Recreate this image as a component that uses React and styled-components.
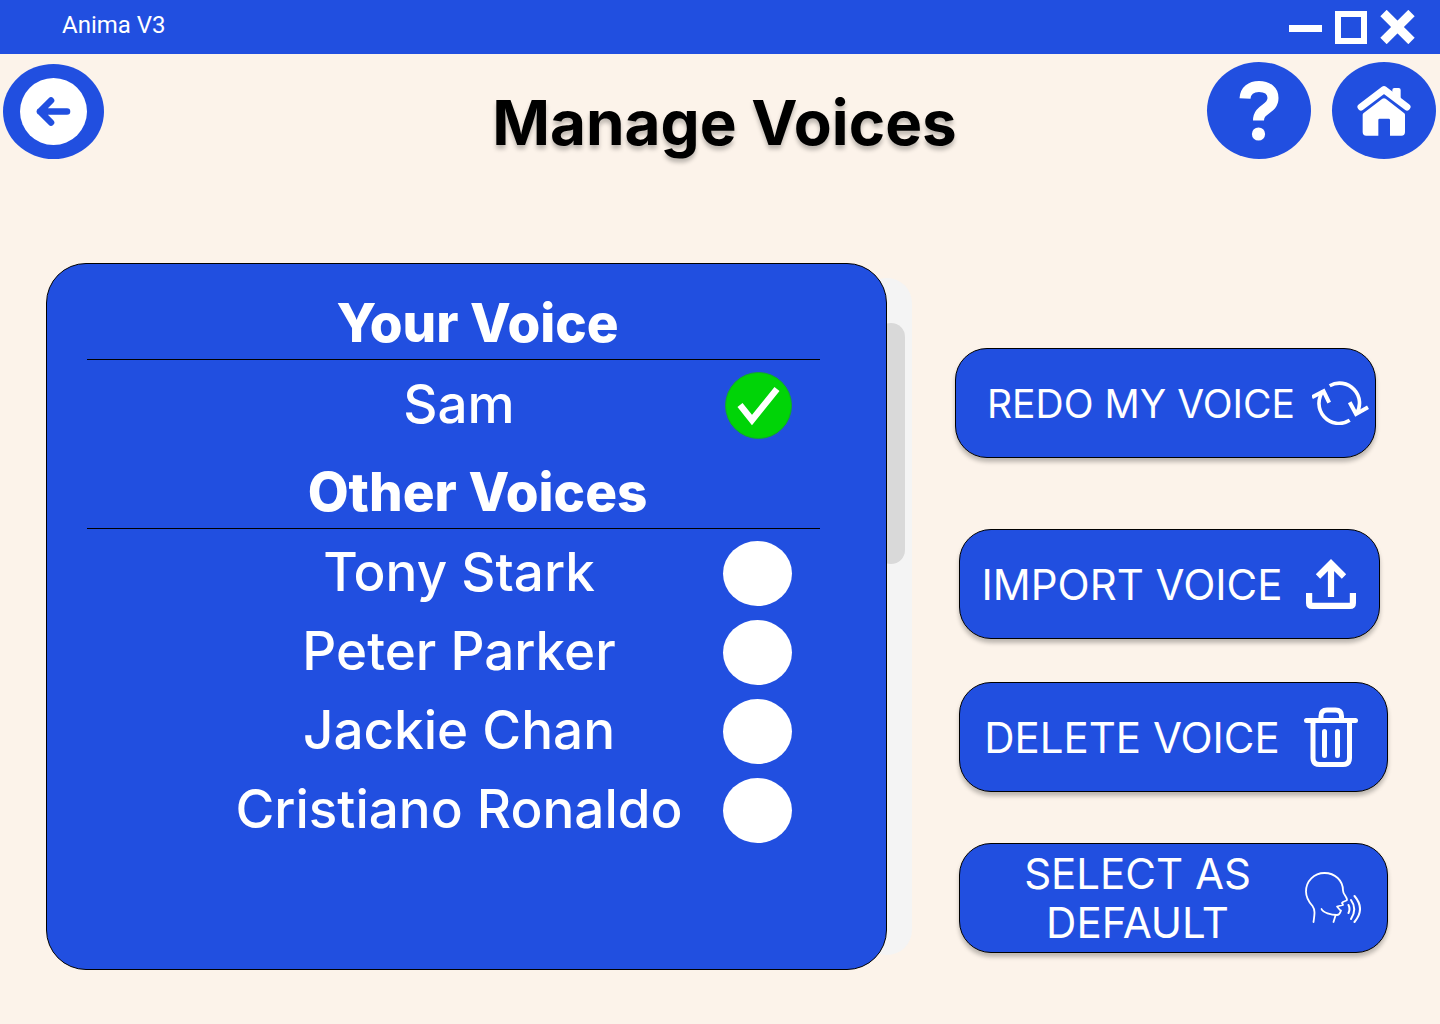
import React, { useState } from "react";
import styled, { createGlobalStyle } from "styled-components";

const blue = "#214fe0";
const display = `Inter, "Open Sans", sans-serif`;

const GlobalStyle = createGlobalStyle`
  *, *::before, *::after { box-sizing: border-box; }
  body { margin: 0; background: #fcf3ea; font-family: ${display}; }
  button { border: 0; padding: 0; background: none; font: inherit; color: inherit; cursor: pointer; }
  svg { display: block; flex: none; }
`;

const Page = styled.div`
  min-height: 100vh;
  display: flex;
  flex-direction: column;
`;

const TitleBar = styled.div`
  height: 54px;
  padding: 0 25px 0 62px;
  display: flex;
  justify-content: space-between;
  align-items: center;
  background: ${blue};
  color: #fff;
`;

const AppName = styled.span`
  font: 400 24px/28px Roboto, sans-serif;
  padding-bottom: 4px;
`;

const WindowControls = styled.div`
  display: flex;
  align-items: center;
  gap: 13px;
`;

const WindowButton = styled.button`
  display: grid;
  place-items: center;
`;

const Header = styled.header`
  display: grid;
  grid-template-columns: 1fr auto 1fr;
  align-items: end;
  padding: 8px 4px 0 3px;
`;

const Title = styled.h1`
  margin: 0;
  padding: 0 0 0 10px;
  font-size: 62px;
  line-height: 72px;
  font-weight: 700;
  color: #000;
  text-shadow: 0 4px 4px rgba(0, 0, 0, 0.25);
`;

const HeaderActions = styled.div`
  display: flex;
  justify-content: flex-end;
  gap: 21px;
`;

const RoundButton = styled.button`
  width: ${(p) => (p.$small ? 101 : 104)}px;
  height: ${(p) => (p.$small ? 95 : 97)}px;
  border-radius: 50%;
  background: ${blue};
  display: grid;
  place-items: center;
`;

const Main = styled.main`
  flex: 1;
  display: grid;
  grid-template-columns: minmax(0, 1fr) 433px;
  gap: 43px;
  padding: 104px 52px 54px 46px;
`;

const ListArea = styled.section`
  display: flex;
`;

const Panel = styled.div`
  position: relative;
  z-index: 1;
  flex: 1;
  min-width: 0;
  padding: 32px 66px 32px 40px;
  border: 1px solid #000;
  border-radius: 40px;
  background: ${blue};
  color: #fff;
`;

const ScrollTrack = styled.div`
  width: 50px;
  margin: 15px 0 15px -25px;
  padding: 45px 7px 0 15px;
  border-radius: 25px;
  background: #f4f4f4;
`;

const ScrollThumb = styled.div`
  height: 241px;
  border-radius: 14px;
  background: #d9d9d9;
`;

const VoiceGroup = styled.fieldset`
  min-width: 0;
  margin: 0 0 ${(p) => p.$after || 0}px;
  padding: 0;
  border: 0;
`;

const GroupTitle = styled.legend`
  width: 100%;
  height: 64px;
  padding: 0 0 0 48px;
  border-bottom: 1px solid #000;
  font-size: 53px;
  line-height: 54px;
  font-weight: 800;
  text-align: center;
`;

const VoiceList = styled.div`
  display: grid;
  gap: 14px;
  padding: 12px 28px 0 110px;
`;

const VoiceRow = styled.label`
  display: grid;
  grid-template-columns: 1fr 69px;
  align-items: center;
  min-height: 65px;
  font-size: 53px;
  line-height: 60px;
  font-weight: 500;
  cursor: pointer;
`;

const VoiceName = styled.span`
  padding: 0 2px 4px 0;
  text-align: center;
  white-space: nowrap;
`;

const Choice = styled.span`
  display: grid;
  place-items: center;

  & > * { grid-area: 1 / 1; }
  & > svg { pointer-events: none; }
`;

const Radio = styled.input`
  appearance: none;
  margin: 0;
  width: 69px;
  height: 65px;
  border-radius: 50%;
  background: #fff;
  cursor: pointer;

  &:checked {
    width: 67px;
    height: 67px;
    justify-self: end;
    background: #00d407;
    border: 1px solid #12a52f;
  }
`;

const Actions = styled.aside`
  display: flex;
  flex-direction: column;
  padding-top: 85px;
`;

const ActionButton = styled.button`
  && {
    display: flex;
    align-items: center;
    min-height: 110px;
    margin: ${(p) => p.$before || 0}px ${(p) => p.$end || 0}px 0 ${(p) => p.$start || 0}px;
    padding: 0 ${(p) => p.$padEnd}px 0 ${(p) => p.$padStart || 3}px;
    border: 1px solid #000;
    border-radius: 32px;
    background: ${blue};
    box-shadow: 0 4px 4px rgba(0, 0, 0, 0.25);
    color: #fff;
    font-size: ${(p) => p.$size || 42}px;
    line-height: 49px;
    font-weight: 400;
  }
`;

const ActionLabel = styled.span`
  flex: 1;
  text-align: center;
  white-space: pre-line;
`;

const ActionIcon = styled.span`
  width: 60px;
  display: grid;
  place-items: center;
`;

const BackIcon = () => (
  <svg width="67" height="67" viewBox="0 0 67 67" aria-hidden="true">
    <circle cx="33.5" cy="33.5" r="33.5" fill="#fff" />
    <path d="M31 22.5 20 33.5l11 11M20 33.5h27" fill="none" stroke={blue} strokeWidth="6.6" strokeLinecap="round" strokeLinejoin="round" />
  </svg>
);

const HelpIcon = () => (
  <svg width="40" height="60" viewBox="-1 0 40 60" aria-hidden="true">
    <path d="M5 17.5C5.500 9.500 11 5.500 19 5.500c8.500 0 14 4.500 14 11.500C33 29 18.500 27 18.500 39.500" fill="none" stroke="#fff" strokeWidth="11" />
    <circle cx="18.500" cy="53" r="6.600" fill="#fff" />
  </svg>
);

const HomeIcon = () => (
  <svg width="54" height="50" viewBox="532 256 162 150" aria-hidden="true">
    <path d="M638 290v-22q0-6 6-6h13q6 0 6 6v44Z" fill="#fff" />
    <path d="M544 319l69-52 69 52" fill="none" stroke="#fff" strokeWidth="21" strokeLinecap="round" strokeLinejoin="round" />
    <path d="M549 342q0-3 3-5l56-43q5-3 10 0l55 43q3 2 3 5v52q0 11-11 11h-34v-47q0-4-4-4h-27q-4 0-4 4v47h-36q-11 0-11-11Z" fill="#fff" />
  </svg>
);

const CheckIcon = () => (
  <svg width="44" height="40" viewBox="0 0 44 40" aria-hidden="true">
    <path d="M4 19l12 15L41 3" fill="none" stroke="#fff" strokeWidth="6.500" />
  </svg>
);

const RedoIcon = () => (
  <svg width="57" height="44" viewBox="0 0 57 44" aria-hidden="true" fill="none" stroke="#fff" strokeWidth="3.600">
    <path d="M17.700 4.700A20 20 0 0 1 44.300 33M37.700 39.300A20 20 0 0 1 11.300 10" />
    <path d="M0 16.300l11.600-6.100 5.600 11.500M37.700 21.300l6.300 11.700 12-6.700" strokeWidth="4" />
  </svg>
);

const ImportIcon = () => (
  <svg width="50" height="50" viewBox="0 0 50 50" aria-hidden="true" fill="none" stroke="#fff" strokeWidth="6.200">
    <path d="M25 38V5M12 17.500 25 4.500l13 13" />
    <path d="M3.100 34v10q0 2.900 3 2.900h37.800q3 0 3-2.900V34" />
  </svg>
);

const TrashIcon = () => (
  <svg width="54" height="60" viewBox="0 0 54 60" aria-hidden="true" fill="none" stroke="#fff" strokeWidth="5" strokeLinecap="round">
    <path d="M2.500 13.500h49M17 12V9q0-6 6-6h8.500q6 0 6 6v3" />
    <path d="M9 14v37q0 6.500 6.500 6.500h23.500q6.500 0 6.500-6.500V14" />
    <path d="M20.500 24.500v24M33.500 24.500v24" />
  </svg>
);

const SpeakIcon = () => (
  <svg width="56" height="52" viewBox="0 0 56 52" aria-hidden="true" fill="none" stroke="#fff" strokeWidth="1.800" strokeLinecap="round" strokeLinejoin="round">
    <path d="M8.500 50c1-7 2-12-1-16C3 29 1 25 1 19.500 1 9 9 1 19.500 1 30 1 38 8.500 38 18.500c0 4 4 6 4 9.500 0 1-4 1-5 3l1 2-6 1.500 3 3.500 1 .500c-1 2-1 4.500-4 4.500C26 43 18 40.500 16.500 37" />
    <path d="M30.500 43.500 28.500 50" />
    <path d="M43.500 33q2 4 0 8M46 28q6.500 9 0 19M49.500 24q11 13 0 26" strokeWidth="2" />
  </svg>
);

const groups = [
  { title: "Your Voice", voices: ["Sam"], after: 26 },
  { title: "Other Voices", voices: ["Tony Stark", "Peter Parker", "Jackie Chan", "Cristiano Ronaldo"] },
];

export default function App() {
  const [selected, setSelected] = useState("Sam");

  return (
    <Page>
      <GlobalStyle />
      <TitleBar>
        <AppName>Anima V3</AppName>
        <WindowControls>
          <WindowButton aria-label="Minimize">
            <svg width="33" height="34"><path d="M0 15h33v7H0z" fill="#fff" /></svg>
          </WindowButton>
          <WindowButton aria-label="Maximize">
            <svg width="32" height="33"><path d="M3 3h26v27H3z" fill="none" stroke="#fff" strokeWidth="6" /></svg>
          </WindowButton>
          <WindowButton aria-label="Close">
            <svg width="35" height="34"><path d="M3.500 3l28 28M31.500 3l-28 28" stroke="#fff" strokeWidth="9" /></svg>
          </WindowButton>
        </WindowControls>
      </TitleBar>

      <Header>
        <RoundButton $small aria-label="Back"><BackIcon /></RoundButton>
        <Title>Manage Voices</Title>
        <HeaderActions>
          <RoundButton aria-label="Help"><HelpIcon /></RoundButton>
          <RoundButton aria-label="Home"><HomeIcon /></RoundButton>
        </HeaderActions>
      </Header>

      <Main>
        <ListArea>
          <Panel>
            {groups.map((group) => (
              <VoiceGroup key={group.title} $after={group.after}>
                <GroupTitle>{group.title}</GroupTitle>
                <VoiceList>
                  {group.voices.map((name) => (
                    <VoiceRow key={name}>
                      <VoiceName>{name}</VoiceName>
                      <Choice>
                        <Radio
                          type="radio"
                          name="voice"
                          value={name}
                          checked={selected === name}
                          onChange={() => setSelected(name)}
                        />
                        {selected === name && <CheckIcon />}
                      </Choice>
                    </VoiceRow>
                  ))}
                </VoiceList>
              </VoiceGroup>
            ))}
          </Panel>
          <ScrollTrack>
            <ScrollThumb />
          </ScrollTrack>
        </ListArea>

        <Actions>
          <ActionButton $end={12} $padStart={16} $padEnd={5} $size={39}>
            <ActionLabel>REDO MY VOICE</ActionLabel>
            <ActionIcon><RedoIcon /></ActionIcon>
          </ActionButton>
          <ActionButton $before={71} $start={4} $end={8} $padEnd={18}>
            <ActionLabel>IMPORT VOICE</ActionLabel>
            <ActionIcon><ImportIcon /></ActionIcon>
          </ActionButton>
          <ActionButton $before={43} $start={4} $padEnd={26}>
            <ActionLabel>DELETE VOICE</ActionLabel>
            <ActionIcon><TrashIcon /></ActionIcon>
          </ActionButton>
          <ActionButton $before={51} $start={4} $padStart={12} $padEnd={24}>
            <ActionLabel>{"SELECT AS\nDEFAULT"}</ActionLabel>
            <ActionIcon><SpeakIcon /></ActionIcon>
          </ActionButton>
        </Actions>
      </Main>
    </Page>
  );
}
